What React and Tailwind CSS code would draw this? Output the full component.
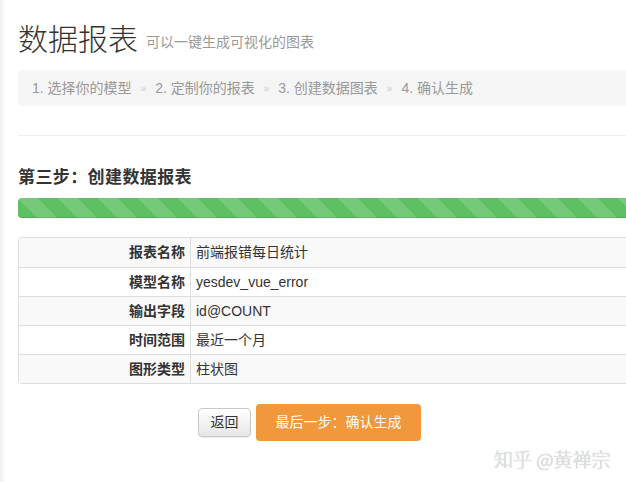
import React from "react";

const FONT = { fontFamily: '"Liberation Sans", "Noto Sans CJK SC", sans-serif' };

const rows = [
  { label: "报表名称", value: "前端报错每日统计" },
  { label: "模型名称", value: "yesdev_vue_error" },
  { label: "输出字段", value: "id@COUNT" },
  { label: "时间范围", value: "最近一个月" },
  { label: "图形类型", value: "柱状图" },
];

const steps = ["1. 选择你的模型", "2. 定制你的报表", "3. 创建数据图表", "4. 确认生成"];

const stripes = {
  backgroundImage:
    "linear-gradient(45deg, rgba(255,255,255,.15) 25%, transparent 25%, transparent 50%, rgba(255,255,255,.15) 50%, rgba(255,255,255,.15) 75%, transparent 75%, transparent)",
  backgroundSize: "40px 40px",
};

export default function App() {
  return (
    <div className="relative w-[626px] h-[482px] overflow-hidden bg-white text-[#333]" style={FONT}>
      <div className="flex h-full">
        {/* 左侧阴影边 */}
        <div className="w-[6px] shrink-0 bg-gradient-to-r from-[#efefef] to-white" />
        <div className="w-[680px] shrink-0 pl-[12px]">
          {/* 标题 */}
          <div className="pt-[21px] flex items-end">
            <h1 className="text-[30px] leading-[38px] font-light text-[#333]">数据报表</h1>
            <span className="ml-[8px] mb-[6px] text-[14px] text-[#999]">可以一键生成可视化的图表</span>
          </div>

          {/* 步骤导航 */}
          <div className="mt-[11px] h-[36px] flex items-center bg-[#f5f5f5] rounded-[4px] px-[14px] text-[14px] text-[#999]">
            {steps.map((s, i) => (
              <React.Fragment key={s}>
                {i > 0 && <span className="mx-[9px] text-[10px] text-[#ccc]">»</span>}
                <span>{s}</span>
              </React.Fragment>
            ))}
          </div>

          <div className="mt-[29px] border-t border-[#eee]" />

          <h2 className="mt-[30px] text-[17px] leading-[24px] font-bold tracking-[0.4px] text-[#333]">第三步：创建数据报表</h2>

          {/* 进度条 */}
          <div
            className="mt-[8px] h-[20px] rounded-[4px] bg-[#5fc063] shadow-[inset_0_-1px_0_rgba(0,0,0,0.12)]"
            style={stripes}
          />

          {/* 信息表 */}
          <div className="mt-[19px] border border-[#ddd] rounded-[4px] overflow-hidden text-[14px]">
            {rows.map((r, i) => (
              <div
                key={r.label}
                className={`flex h-[29px] items-center ${i > 0 ? "border-t border-[#ddd]" : ""} ${
                  i % 2 === 0 ? "bg-[#f9f9f9]" : "bg-white"
                }`}
              >
                <div className="w-[172px] h-full flex items-center justify-end pr-[5px] border-r border-[#ddd] font-bold">
                  {r.label}
                </div>
                <div className="pl-[5px]">{r.value}</div>
              </div>
            ))}
          </div>

          {/* 按钮 */}
          <div className="mt-[20px] flex items-center pl-[180px]">
            <button className="h-[29px] w-[53px] rounded-[4px] border border-[#c8c8c8] bg-gradient-to-b from-white to-[#e6e6e6] text-[14px] text-[#333] shadow-[0_1px_1px_rgba(0,0,0,0.08)]">
              返回
            </button>
            <button className="ml-[5px] h-[37px] w-[165px] rounded-[4px] bg-[#f1973c] text-[14px] text-white">
              最后一步：确认生成
            </button>
          </div>
        </div>
      </div>

      {/* 水印 */}
      <div
        className="absolute left-[494px] top-[445px] text-[19px] text-[#e4e4e4] [text-shadow:0_0_1px_#aaa]"
        style={{ fontFamily: '"Noto Sans CJK SC", sans-serif', fontWeight: 300 }}
      >
        知乎 @黄禅宗
      </div>
    </div>
  );
}
